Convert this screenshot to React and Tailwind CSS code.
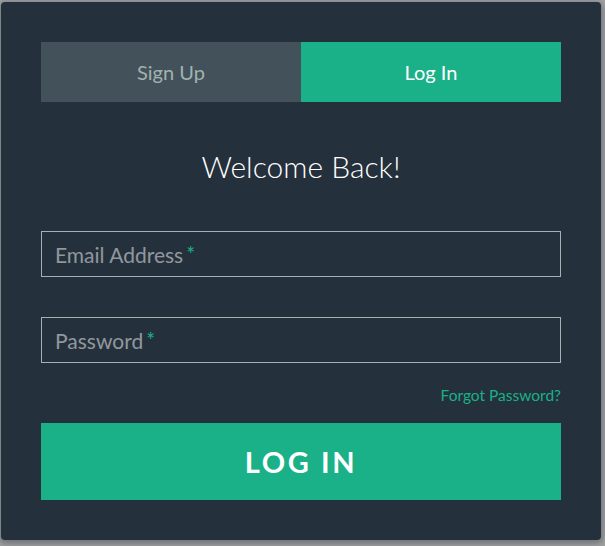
import React from 'react';

function Field({ label, type }) {
    return (
        <label className="relative block h-[46px] border border-[#a0b3b0]">
            <span className="pointer-events-none absolute left-[13px] top-1/2 -translate-y-1/2 text-[21px] leading-none text-white/50">
                {label}
                <span className="relative -top-[1px] ml-[3px] text-[#1ab188]">*</span>
            </span>
            <input type={type} className="h-full w-full bg-transparent px-[13px] text-[21px] text-white outline-none" />
        </label>
    );
}

export default function App() {
    return (
        <div className="min-h-[546px] bg-[#a3a3a3] pl-[1px] pt-[2px] font-['Lato','Liberation_Sans',sans-serif]">
            <div className="w-[600px] rounded-[4px] bg-[#24303c] p-10 shadow-[0_2px_6px_2px_rgba(19,35,47,0.35)]">
                {/* tabs */}
                <div className="grid h-[60px] grid-cols-2 text-[20px]">
                    <button className="bg-[#43525a] text-[#a0b3b0]">Sign Up</button>
                    <button className="bg-[#1ab188] text-white">Log In</button>
                </div>

                <h1 className="mt-[44px] text-center text-[30px] font-light leading-[40px] text-white">
                    Welcome Back!
                </h1>

                <form className="mt-[45px]" onSubmit={(e) => e.preventDefault()}>
                    <Field label="Email Address" type="email" />
                    <div className="mt-10">
                        <Field label="Password" type="password" />
                    </div>

                    <p className="mt-[22px] text-right text-[15.5px] leading-5">
                        <a href="#" className="text-[#1ab188]">Forgot Password?</a>
                    </p>

                    <button
                        type="submit"
                        className="mt-[18px] block h-[77px] w-full bg-[#1ab188] text-[29px] font-bold uppercase tracking-[0.09em] text-white"
                    >
                        Log In
                    </button>
                </form>
            </div>
        </div>
    );
}
